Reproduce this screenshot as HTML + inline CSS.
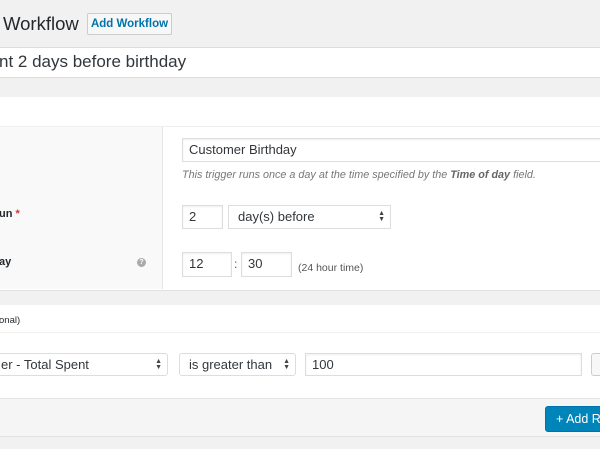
<!DOCTYPE html>
<html><head><style>
body{margin:0;width:600px;height:449px;background:#f1f1f1;font-family:"Liberation Sans",Arial,sans-serif;color:#23282d;position:relative;overflow:hidden}
.a{position:absolute;white-space:nowrap}
.inp{position:absolute;white-space:nowrap;background:#fff;border:1px solid #ddd;box-shadow:inset 0 1px 2px rgba(0,0,0,.07);box-sizing:border-box;font-size:13px;color:#32373c;padding-left:6px;line-height:22px}
.sel{position:absolute;white-space:nowrap;background:#fff;border:1px solid #ddd;border-radius:3px;box-sizing:border-box;font-size:13px;color:#32373c;padding-left:9px;line-height:22px}
.arr{position:absolute;right:5px;top:5px;font-size:7px;line-height:6px;color:#444}
</style></head><body>
<div class="a" style="left:3px;top:11px;font-size:18.5px;line-height:26px;color:#23282d">Workflow</div>
<div class="a" style="left:87px;top:13px;width:85px;height:22px;border:1px solid #ccc;background:#f7f7f7;box-sizing:border-box;border-radius:2px;font-size:11.5px;font-weight:bold;color:#0073aa;text-align:center;line-height:20px">Add Workflow</div>
<div class="a" style="left:-2px;top:47px;width:610px;height:31px;background:#fff;border:1px solid #ddd;box-sizing:border-box"></div>
<div class="a" style="left:-1px;top:51px;font-size:17px;line-height:22px;color:#32373c">nt 2 days before birthday</div>

<div class="a" style="left:0;top:97px;width:600px;height:193px;background:#fff;border-bottom:1px solid #e1e1e1"></div>
<div class="a" style="left:0;top:126px;width:600px;height:1px;background:#eee"></div>
<div class="a" style="left:0;top:127px;width:162px;height:162px;background:#f9f9f9;border-right:1px solid #e5e5e5"></div>
<div class="inp" style="left:182px;top:138px;width:430px;height:24px">Customer Birthday</div>
<div class="a" style="left:182px;top:169px;font-size:10.8px;font-style:italic;color:#777">This trigger runs once a day at the time specified by the <b style="color:#666">Time of day</b> field.</div>
<div class="a" style="left:-1px;top:208px;font-size:11px;font-weight:bold;color:#23282d">un <span style="color:#dc3232">*</span></div>
<div class="inp" style="left:182px;top:205px;width:41px;height:24px">2</div>
<div class="sel" style="left:228px;top:205px;width:163px;height:24px;border-radius:0">day(s) before<span class="arr">▲<br>▼</span></div>
<div class="a" style="left:-1px;top:256px;font-size:11px;font-weight:bold;color:#23282d">ay</div>
<div class="a" style="left:137px;top:258px;width:9px;height:9px;border-radius:50%;background:#aaa;color:#fff;font-size:7px;line-height:9px;text-align:center;font-weight:bold">?</div>
<div class="inp" style="left:182px;top:252px;width:50px;height:25px">12</div>
<div class="a" style="left:234px;top:257px;font-size:12px;color:#555">:</div>
<div class="inp" style="left:241px;top:252px;width:51px;height:25px">30</div>
<div class="a" style="left:298px;top:262px;font-size:10.5px;color:#555">(24 hour time)</div>

<div class="a" style="left:0;top:305px;width:600px;height:93px;background:#fff;border-bottom:1px solid #e5e5e5"></div>
<div class="a" style="left:0;top:332px;width:600px;height:1px;background:#f1f1f1"></div>
<div class="a" style="left:-1px;top:315px;font-size:9.5px;color:#23282d">onal)</div>
<div class="sel" style="left:-10px;top:353px;width:178px;height:23px;padding-left:10px">er - Total Spent<span class="arr">▲<br>▼</span></div>
<div class="sel" style="left:179px;top:353px;width:117px;height:23px">is greater than<span class="arr">▲<br>▼</span></div>
<div class="inp" style="left:305px;top:353px;width:277px;height:23px">100</div>
<div class="a" style="left:591px;top:353px;width:20px;height:23px;border:1px solid #ccc;background:#f7f7f7;box-sizing:border-box;border-radius:3px"></div>
<div class="a" style="left:0;top:399px;width:600px;height:37px;background:#f5f5f5;border-bottom:1px solid #e1e1e1"></div>
<div class="a" style="left:545px;top:406px;width:70px;height:26px;background:#0085ba;border:1px solid #0073aa;box-sizing:border-box;border-radius:3px;color:#fff;font-size:12.5px;line-height:24px;padding-left:10px">+ Add Rule</div>
</body></html>
